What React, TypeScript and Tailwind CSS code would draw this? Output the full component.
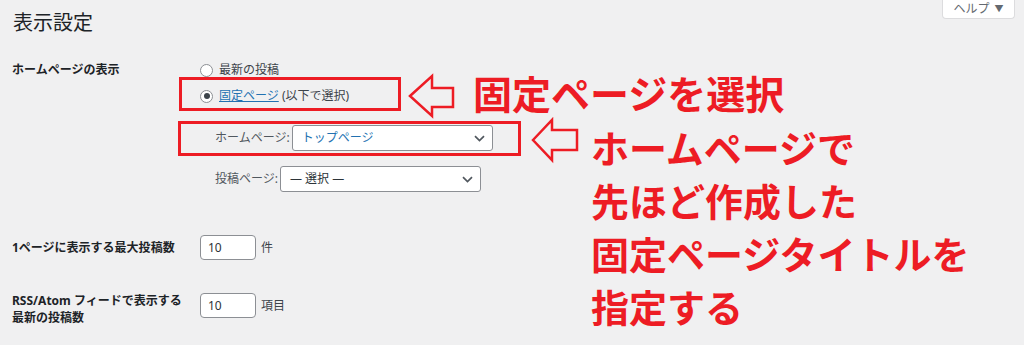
import React from 'react';

const RED = '#ed1c24';

const Chevron = () => (
  <svg width="11" height="7" viewBox="0 0 11 7" className="shrink-0">
    <path d="M1 1.2 L5.5 5.5 L10 1.2" fill="none" stroke="#50575e" strokeWidth="1.7" />
  </svg>
);

const Radio = ({ checked }: { checked?: boolean }) => (
  <span className="flex h-[13px] w-[13px] shrink-0 items-center justify-center rounded-full border border-[#8c8f94] bg-white">
    {checked && <span className="h-[6px] w-[6px] rounded-full bg-[#3c434a]" />}
  </span>
);

const SelectBox = ({ value, blue }: { value: string; blue?: boolean }) => (
  <div className="flex h-[26px] w-[201px] items-center justify-between rounded-[3px] border border-[#8c8f94] bg-white pl-[9px] pr-[7px]">
    <span className={blue ? 'text-[#2271b1]' : 'text-[#2c3338]'}>{value}</span>
    <Chevron />
  </div>
);

const NumberInput = ({ value }: { value: string }) => (
  <div className="flex h-[25px] w-[56px] items-center rounded-[4px] border border-[#8c8f94] bg-white pl-[7px] text-[#2c3338]">
    {value}
  </div>
);

export default function App() {
  return (
    <div
      className="relative h-[345px] w-[1024px] overflow-hidden bg-[#f0f0f1] text-[12px] text-[#3c434a]"
      style={{ fontFamily: "'Noto Sans', 'Noto Sans CJK JP', sans-serif" }}
    >
      {/* header */}
      <div className="flex items-start justify-between">
        <h1 className="ml-[13px] mt-[9px] text-[20px] leading-[28px] text-[#1d2327]">表示設定</h1>
        <div className="mr-[9px] flex h-[19px] w-[73px] items-center justify-center gap-[5px] rounded-b-[4px] border border-t-0 border-[#dcdcde] bg-white text-[12px] text-[#646970]">
          <span>ヘルプ</span>
          <span className="text-[9px]">▼</span>
        </div>
      </div>

      {/* row 1 */}
      <div className="flex">
        <div className="w-[200px] shrink-0 pl-[12px] pt-[24px] font-bold leading-[18px] text-[#1d2327]">
          ホームページの表示
        </div>
        <div className="flex flex-col pt-[24px]">
          <label className="flex h-[18px] items-center gap-[6px]">
            <Radio />
            <span>最新の投稿</span>
          </label>
          <label className="mt-[8px] flex h-[18px] items-center gap-[6px]">
            <Radio checked />
            <span>
              <span className="text-[#2271b1] underline">固定ページ</span> (以下で選択)
            </span>
          </label>
          <div className="ml-[15px] mt-[20px] flex items-center gap-[2px]">
            <span className="text-[#50575e]">ホームページ:</span>
            <SelectBox value="トップページ" blue />
          </div>
          <div className="ml-[15px] mt-[15px] flex items-center gap-[2px]">
            <span className="text-[#50575e]">投稿ページ:</span>
            <SelectBox value="— 選択 —" />
          </div>
        </div>
      </div>

      {/* row 2 */}
      <div className="mt-[43px] flex items-center">
        <div className="w-[200px] shrink-0 pl-[12px] font-bold leading-[18px] text-[#1d2327]">
          1ページに表示する最大投稿数
        </div>
        <NumberInput value="10" />
        <span className="ml-[5px]">件</span>
      </div>

      {/* row 3 */}
      <div className="mt-[32px] flex items-start">
        <div className="w-[200px] shrink-0 pl-[12px] font-bold leading-[17px] text-[#1d2327]">
          RSS/Atom フィードで表示する
          <br />
          最新の投稿数
        </div>
        <div className="mt-[1px] flex items-center">
          <NumberInput value="10" />
          <span className="ml-[5px]">項目</span>
        </div>
      </div>

      {/* annotations */}
      <div className="absolute left-[179px] top-[77px] h-[34px] w-[222px] border-[3px] border-[#ed1c24]" />
      <div className="absolute left-[178px] top-[121px] h-[35px] w-[343px] border-[3px] border-[#ed1c24]" />

      <svg className="absolute left-0 top-0" width="1024" height="345">
        <polygon
          points="410,96 432,76 432,88 453,88 453,107 432,107 432,116"
          fill="none"
          stroke={RED}
          strokeWidth="2.5"
          strokeLinejoin="miter"
        />
        <polygon
          points="533,140 552,120 552,130 577,130 577,150 552,150 552,160"
          fill="none"
          stroke={RED}
          strokeWidth="2.5"
          strokeLinejoin="miter"
        />
      </svg>

      <div
        className="absolute left-[473px] top-[72px] whitespace-nowrap text-[39px] font-bold leading-[40px]"
        style={{ color: RED, fontFamily: "'Noto Sans CJK JP', sans-serif" }}
      >
        固定ページを選択
      </div>
      <div
        className="absolute left-[591px] top-[120px] whitespace-nowrap text-[38px] font-bold leading-[53px]"
        style={{ color: RED, fontFamily: "'Noto Sans CJK JP', sans-serif" }}
      >
        ホームページで
        <br />
        先ほど作成した
        <br />
        固定ページタイトルを
        <br />
        指定する
      </div>
    </div>
  );
}
